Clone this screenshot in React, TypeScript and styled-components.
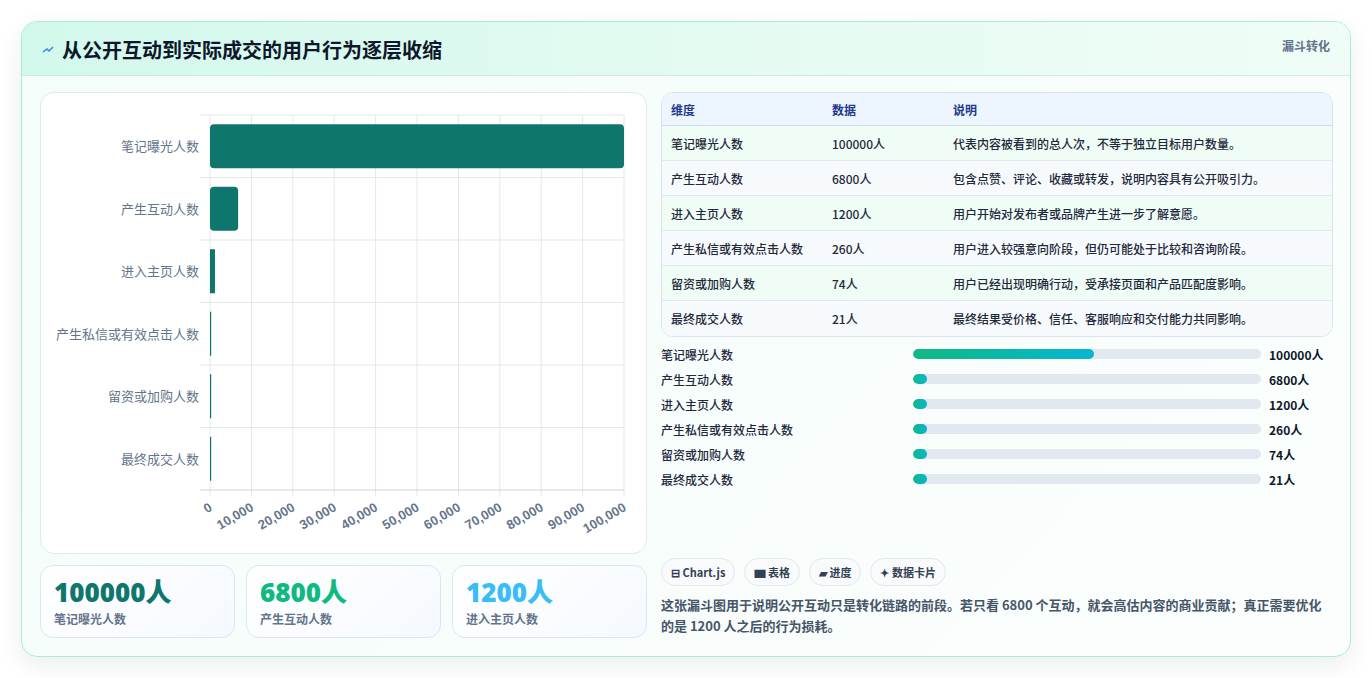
import React from "react";
import styled, { createGlobalStyle } from "styled-components";

const Global = createGlobalStyle`
  html, body { margin: 0; padding: 0; background: #fff; }
  body { font-family: "Noto Sans CJK SC", "Noto Sans", sans-serif; }
  * { box-sizing: border-box; }
`;

const Page = styled.div`
  padding: 21px 21px 20px 21px;
  width: 1372px;
  height: 678px;
`;
const Card = styled.div`
  width: 1330px;
  height: 636px;
  border: 1px solid #a7ecd9;
  border-radius: 16px;
  background: linear-gradient(135deg, #f3fdf9 0%, #f7fdfb 50%, #fbfefd 100%);
  box-shadow: 0 8px 24px rgba(15, 23, 42, 0.08);
  overflow: hidden;
  display: flex;
  flex-direction: column;
`;
const Header = styled.div`
  height: 55px;
  display: flex;
  align-items: flex-start;
  justify-content: space-between;
  padding: 0 20px 0 20px;
  background: linear-gradient(90deg, #d2f8ec 0%, #e6fbf2 60%, #effdf6 100%);
  border-bottom: 1px solid #c9eee4;
`;
const Title = styled.h1`
  margin: 13px 0 0;
  font-size: 20px;
  font-weight: 700;
  color: #0f172a;
  display: flex;
  align-items: center;
  gap: 8px;
`;
const Tag = styled.span`
  margin-top: 15px;
  font-size: 12px;
  font-weight: 700;
  color: #64748b;
`;
const Body = styled.div`
  display: grid;
  grid-template-columns: 607px 672px;
  gap: 14px;
  padding: 16px 18px 18px 18px;
  flex: 1;
`;
const Col = styled.div`
  display: flex;
  flex-direction: column;
  gap: 11px;
`;
const ChartBox = styled.div`
  height: 462px;
  background: #fff;
  border: 1px solid #e2e8f0;
  border-radius: 14px;
`;
const Stats = styled.div`
  display: grid;
  grid-template-columns: repeat(3, 1fr);
  gap: 11px;
`;
const Stat = styled.div`
  height: 73px;
  border: 1px solid #dbe6f3;
  border-radius: 13px;
  background: linear-gradient(135deg, #ffffff, #f5f9ff);
  padding: 10px 13px;
`;
const StatNum = styled.div<{ $c: string }>`
  font-size: 26px;
  font-weight: 800;
  color: ${(p) => p.$c};
  line-height: 32px;
  font-family: "Open Sans", "Noto Sans CJK SC", sans-serif;
`;
const StatLabel = styled.div`
  font-size: 12px;
  font-weight: 600;
  color: #64748b;
  margin-top: 2px;
`;
const Table = styled.table`
  width: 100%;
  border-collapse: separate;
  border-spacing: 0;
  border: 1px solid #dbe3ee;
  border-radius: 12px;
  overflow: hidden;
  font-size: 12px;
  background: #fff;
`;
const Th = styled.th`
  text-align: left;
  height: 33px;
  padding: 0 9px;
  color: #1e3a8a;
  font-weight: 600;
  background: #edf5fe;
  border-bottom: 1px solid #cfdbe8;
`;
const Tr = styled.tr<{ $alt: boolean }>`
  background: ${(p) => (p.$alt ? "#f7fafc" : "#f0fdf6")};
`;
const Td = styled.td<{ $last: boolean }>`
  height: 35px;
  padding: 0 9px;
  color: #1e293b;
  font-weight: 500;
  border-bottom: ${(p) => (p.$last ? "none" : "1px solid #e2e8f0")};
`;
const Bars = styled.div`
  display: flex;
  flex-direction: column;
  gap: 7px;
  margin-top: 8px;
`;
const BarRow = styled.div`
  display: grid;
  grid-template-columns: 244px 348px 1fr;
  align-items: center;
  gap: 8px;
  height: 18px;
  font-size: 12px;
  font-weight: 500;
  color: #1e293b;
`;
const Track = styled.div`
  height: 10px;
  border-radius: 5px;
  background: #e2e8f0;
  overflow: hidden;
`;
const Fill = styled.div`
  height: 100%;
  min-width: 14px;
  border-radius: 5px;
  background: linear-gradient(90deg, #10b981, #06b6d4);
`;
const Value = styled.span`
  font-weight: 700;
  color: #0f172a;
`;
const Chips = styled.div`
  display: flex;
  gap: 9px;
  margin-top: auto;
`;
const Chip = styled.span`
  height: 28px;
  padding: 0 9px;
  border: 1px solid #e2e8f0;
  border-radius: 14px;
  background: #f8fafc;
  font-size: 11px;
  font-weight: 700;
  color: #334155;
  display: inline-flex;
  align-items: center;
`;
const Note = styled.p`
  margin: 8px 0 0;
  font-size: 13px;
  line-height: 21px;
  font-weight: 700;
  color: #475569;
`;
const RightCol = styled.div`
  display: flex;
  flex-direction: column;
  padding-bottom: 2px;
`;

const data = [
  ["笔记曝光人数", 100000, "代表内容被看到的总人次，不等于独立目标用户数量。"],
  ["产生互动人数", 6800, "包含点赞、评论、收藏或转发，说明内容具有公开吸引力。"],
  ["进入主页人数", 1200, "用户开始对发布者或品牌产生进一步了解意愿。"],
  ["产生私信或有效点击人数", 260, "用户进入较强意向阶段，但仍可能处于比较和咨询阶段。"],
  ["留资或加购人数", 74, "用户已经出现明确行动，受承接页面和产品匹配度影响。"],
  ["最终成交人数", 21, "最终结果受价格、信任、客服响应和交付能力共同影响。"],
] as const;

function Chart() {
  const x0 = 169, x1 = 583, y0 = 22, y1 = 397;
  const rowH = (y1 - y0) / 6;
  const ticks = Array.from({ length: 11 }, (_, i) => i * 10000);
  return (
    <svg width="607" height="462" style={{ display: "block" }}>
      {ticks.map((t, i) => {
        const x = x0 + ((x1 - x0) * i) / 10;
        return <line key={i} x1={x} x2={x} y1={y0} y2={y1 + 6} stroke="#e5e7eb" />;
      })}
      {data.map((_, i) => (
        <line key={i} x1={x0 - 10} x2={x1} y1={y0 + rowH * i} y2={y0 + rowH * i} stroke="#e5e7eb" />
      ))}
      <line x1={x0 - 10} x2={x1} y1={y1} y2={y1} stroke="#cbd5e1" />
      {data.map(([label, v], i) => {
        const cy = y0 + rowH * i + rowH / 2;
        const w = Math.max(((x1 - x0) * v) / 100000, 1.2);
        return (
          <g key={label}>
            <text x={x0 - 11} y={cy + 5} textAnchor="end" fontSize="13" fill="#64748b">{label}</text>
            <rect x={x0} y={cy - 22} width={w} height={44} rx={w > 6 ? 4 : 0} fill="#0f766e" />
          </g>
        );
      })}
      {ticks.map((t, i) => {
        const x = x0 + ((x1 - x0) * i) / 10;
        return (
          <text key={i} x={x + 3} y={y1 + 20} textAnchor="end" fontSize="13" fontWeight="700" fill="#64748b"
            fontFamily="Liberation Sans, sans-serif" transform={`rotate(-30 ${x + 3} ${y1 + 20})`}>
            {t.toLocaleString("en-US")}
          </text>
        );
      })}
    </svg>
  );
}

export default function App() {
  return (
    <Page>
      <Global />
      <Card>
        <Header>
          <Title>
            <svg width="12" height="10" viewBox="0 0 12 10"><path d="M1 7 L5 4 L7 6 L11 2" stroke="#3b82f6" strokeWidth="1.5" fill="none" /></svg>
            从公开互动到实际成交的用户行为逐层收缩
          </Title>
          <Tag>漏斗转化</Tag>
        </Header>
        <Body>
          <Col>
            <ChartBox><Chart /></ChartBox>
            <Stats>
              <Stat><StatNum $c="#0f766e">100000人</StatNum><StatLabel>笔记曝光人数</StatLabel></Stat>
              <Stat><StatNum $c="#10b981">6800人</StatNum><StatLabel>产生互动人数</StatLabel></Stat>
              <Stat><StatNum $c="#38bdf8">1200人</StatNum><StatLabel>进入主页人数</StatLabel></Stat>
            </Stats>
          </Col>
          <RightCol>
            <Table>
              <colgroup><col style={{ width: 161 }} /><col style={{ width: 121 }} /><col /></colgroup>
              <thead><tr><Th>维度</Th><Th>数据</Th><Th>说明</Th></tr></thead>
              <tbody>
                {data.map(([l, v, d], i) => (
                  <Tr key={l} $alt={i % 2 === 1}>
                    <Td $last={i === 5}>{l}</Td>
                    <Td $last={i === 5}>{v}人</Td>
                    <Td $last={i === 5}>{d}</Td>
                  </Tr>
                ))}
              </tbody>
            </Table>
            <Bars>
              {data.map(([l, v], i) => (
                <BarRow key={l}>
                  <span>{l}</span>
                  <Track><Fill style={{ width: i === 0 ? "52%" : "0%" }} /></Track>
                  <Value>{v}人</Value>
                </BarRow>
              ))}
            </Bars>
            <Chips>
              <Chip>⊟ Chart.js</Chip>
              <Chip>▆ 表格</Chip>
              <Chip>▰ 进度</Chip>
              <Chip>✦ 数据卡片</Chip>
            </Chips>
            <Note>这张漏斗图用于说明公开互动只是转化链路的前段。若只看 6800 个互动，就会高估内容的商业贡献；真正需要优化的是 1200 人之后的行为损耗。</Note>
          </RightCol>
        </Body>
      </Card>
    </Page>
  );
}
